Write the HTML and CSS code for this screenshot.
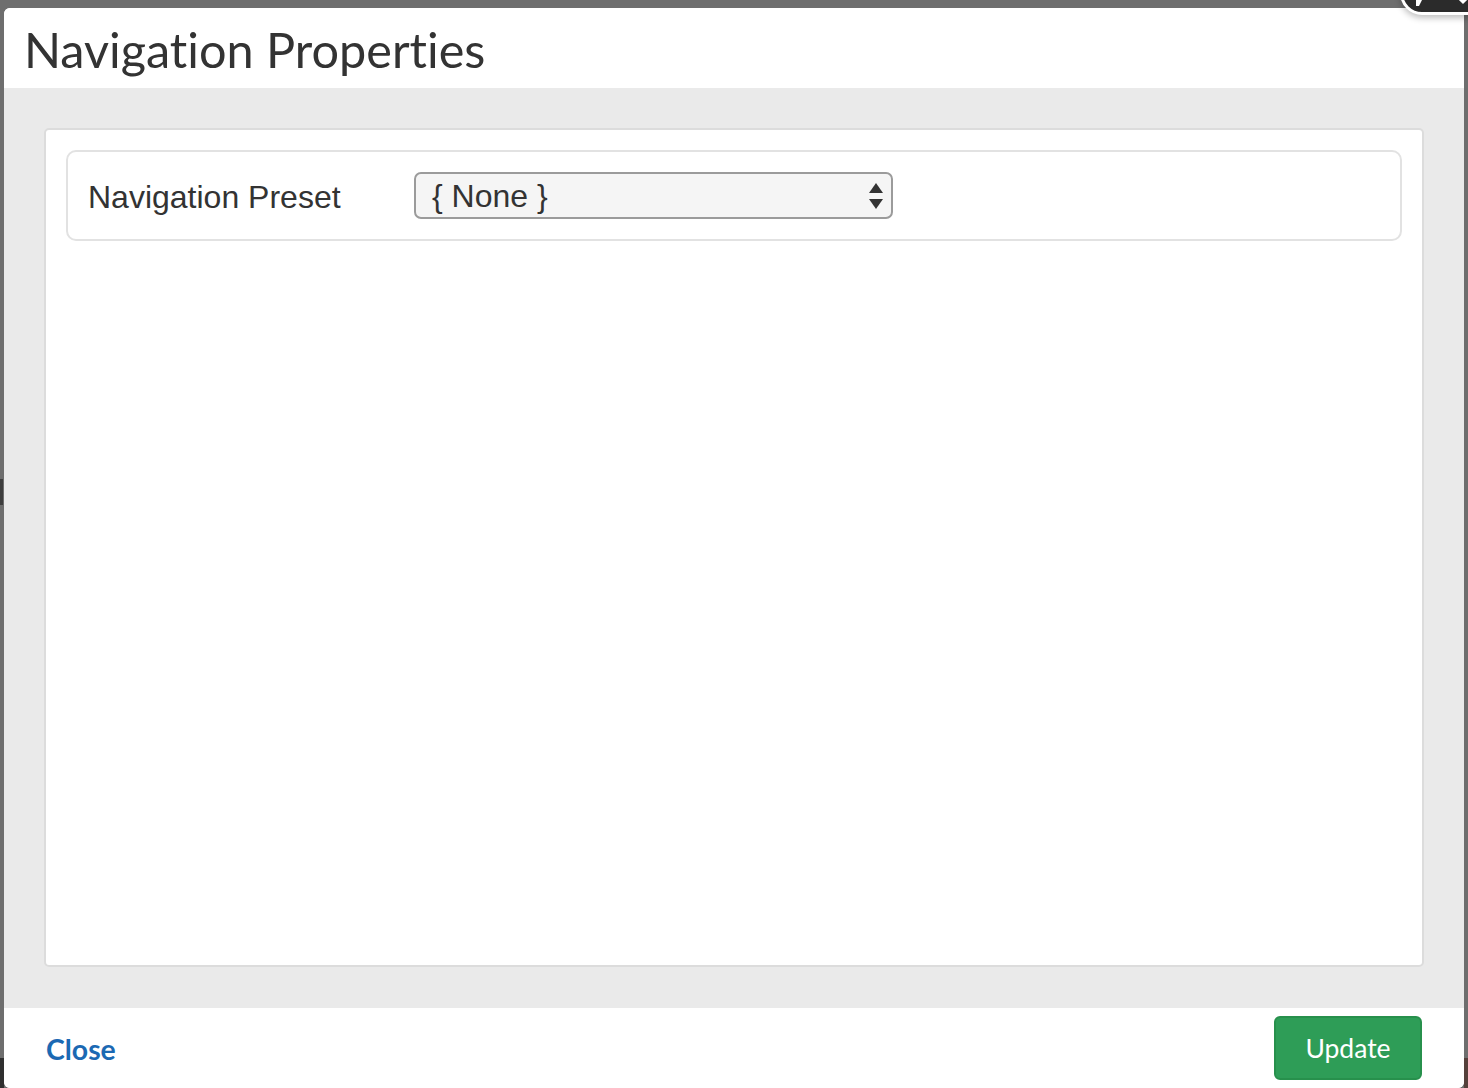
FILE: index.html
```html
<!DOCTYPE html>
<html>
<head>
<meta charset="utf-8">
<link rel="stylesheet" href="styles.css">
</head>
<body>
  <div class="backdrop">
    <div class="edge-mark"></div>
    <div class="corner-bl"></div>
    <div class="corner-br"></div>
    <div class="modal">
      <div class="modal-header">
        <h1 class="modal-title">Navigation Properties</h1>
      </div>
      <div class="modal-body">
        <div class="panel">
          <div class="field-row">
            <label class="field-label">Navigation Preset</label>
            <div class="select">
              <span class="select-value">{ None }</span>
              <svg class="select-arrows" width="16" height="28" viewBox="0 0 16 28">
                <path d="M8 1 L15 11 L1 11 Z" fill="#333"/>
                <path d="M1 17 L15 17 L8 27 Z" fill="#333"/>
              </svg>
            </div>
          </div>
        </div>
      </div>
      <div class="modal-footer">
        <a class="link-close">Close</a>
        <button class="btn-update">Update</button>
      </div>
    </div>
    <div class="close-blob">
      <svg width="70" height="14" viewBox="0 0 70 14">
        <path d="M13 0 L20 0 L16 8 L13 8 Z" fill="#fff"/>
        <path d="M56 0 L60 4 L64 0" stroke="#fff" stroke-width="3" fill="none"/>
      </svg>
    </div>
  </div>
</body>
</html>
```

FILE: styles.css
```css
html, body {
  margin: 0;
  padding: 0;
}
body {
  background: #6e6e6e;
  width: 1468px;
  height: 1088px;
  overflow: hidden;
}
.backdrop {
  position: relative;
  width: 1468px;
  height: 1088px;
  padding: 8px 4px 0 4px;
  box-sizing: border-box;
}
.edge-mark {
  position: absolute;
  left: 0;
  top: 479px;
  width: 3px;
  height: 26px;
  background: #3e3e3e;
}
.corner-bl {
  position: absolute;
  left: 0;
  top: 1058px;
  width: 4px;
  height: 30px;
  background: #2f2f2f;
}
.corner-br {
  position: absolute;
  right: 0;
  top: 1058px;
  width: 4px;
  height: 30px;
  background: #55403b;
}
.modal {
  position: relative;
  height: 1080px;
  background: #fff;
  border-radius: 6px;
  display: flex;
  flex-direction: column;
  overflow: hidden;
}
.modal-header {
  height: 80px;
  flex: none;
  background: #fff;
  display: flex;
  align-items: center;
  padding: 0 20px;
}
.modal-title {
  margin: 0;
  font-family: Lato, "Open Sans", sans-serif;
  font-weight: 400;
  font-size: 48.6px;
  font-variant-ligatures: none;
  color: #333;
  line-height: 1;
  position: relative;
  top: 1px;
}
.modal-body {
  flex: 1;
  background: #eaeaea;
  padding: 40px 40px 41px 40px;
  display: flex;
}
.panel {
  flex: 1;
  background: #fff;
  border: 2px solid #dcdcdc;
  border-radius: 5px;
  padding: 20px;
}
.field-row {
  height: 87px;
  border: 2px solid #e2e2e2;
  border-radius: 10px;
  display: flex;
  align-items: center;
  padding: 0 20px;
}
.field-label {
  width: 326px;
  font-family: "Liberation Sans", Arial, sans-serif;
  font-size: 32px;
  color: #333;
  position: relative;
  top: 2px;
}
.select {
  box-sizing: border-box;
  width: 479px;
  height: 47px;
  border: 2px solid #9b9b9b;
  border-radius: 7px;
  background: #f5f5f5;
  display: flex;
  align-items: center;
  justify-content: space-between;
  padding: 0 7px 0 16px;
}
.select-value {
  font-family: "Liberation Sans", Arial, sans-serif;
  font-size: 32px;
  color: #333;
  position: relative;
  top: 1px;
}
.select-arrows {
  display: block;
}
.modal-footer {
  height: 80px;
  flex: none;
  background: #fff;
  display: flex;
  align-items: center;
  justify-content: space-between;
  padding: 0 42px 0 42px;
}
.link-close {
  font-family: Lato, "Open Sans", sans-serif;
  font-weight: 700;
  font-size: 28.4px;
  color: #1b69b3;
  position: relative;
  top: 1px;
}
.btn-update {
  width: 148px;
  height: 64px;
  background: #2e9d57;
  border: 2px solid #27904c;
  border-radius: 6px;
  color: #fff;
  font-family: Lato, "Open Sans", sans-serif;
  font-size: 26.5px;
  padding: 0;
}
.close-blob {
  position: absolute;
  left: 1400px;
  top: -32px;
  width: 100px;
  height: 41px;
  background: #2b2b2b;
  border: 3px solid #fff;
  border-radius: 22px;
  box-shadow: 0 3px 6px rgba(0,0,0,0.25);
  display: flex;
  align-items: flex-end;
}
.close-blob svg {
  display: block;
}
```
